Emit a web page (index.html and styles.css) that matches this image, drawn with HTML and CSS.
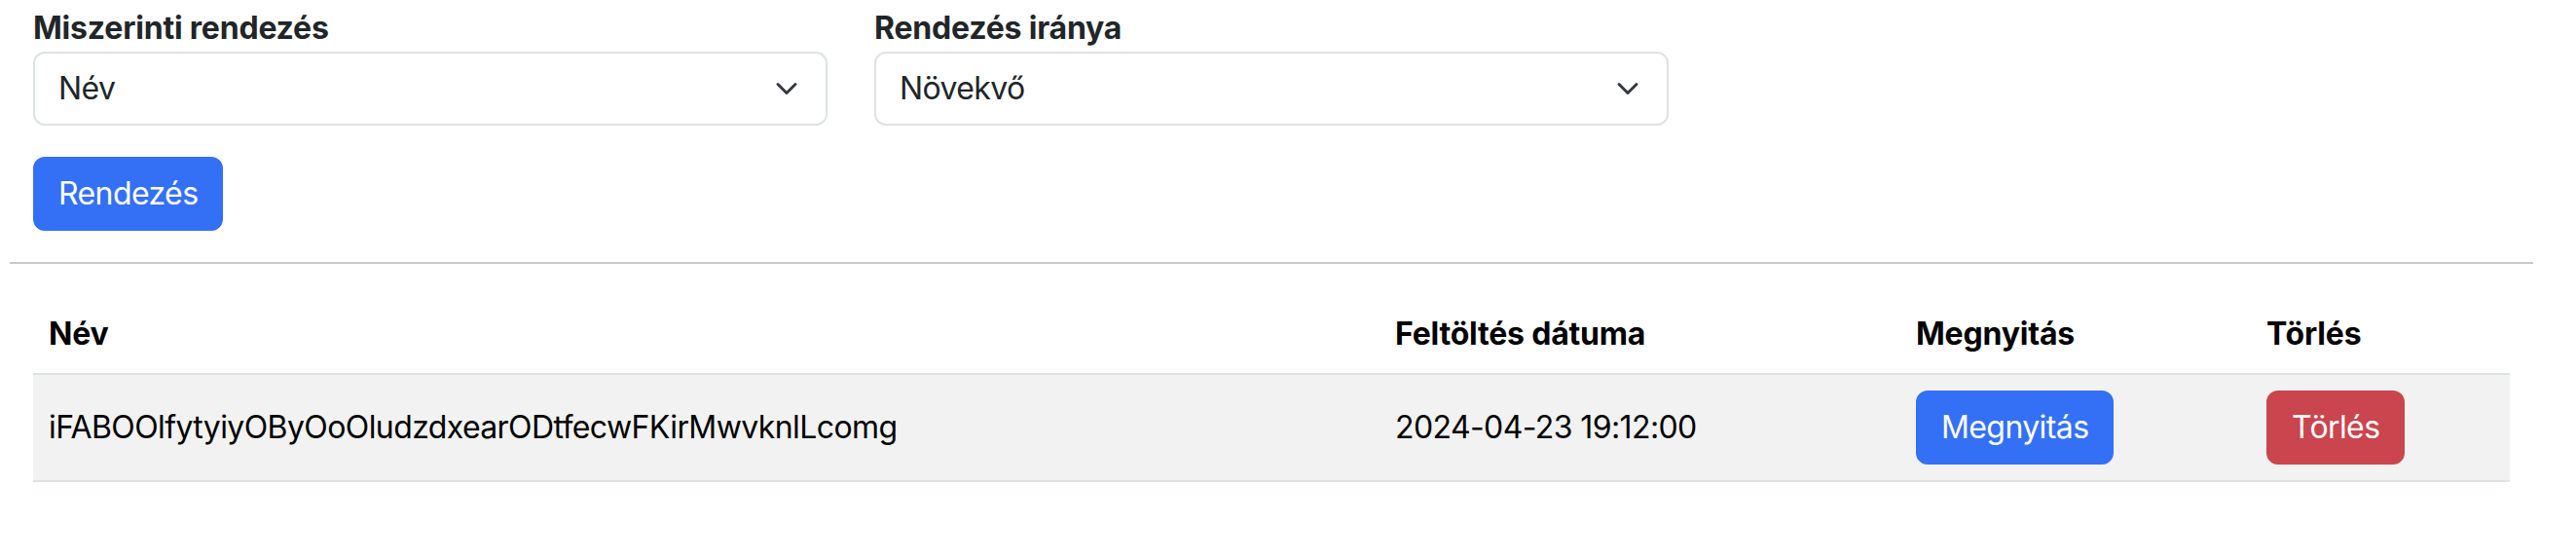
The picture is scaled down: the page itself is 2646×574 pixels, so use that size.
FILE: index.html
```html
<!DOCTYPE html>
<html lang="hu">
<head>
<meta charset="utf-8">
<title>Rendezés</title>
<link rel="stylesheet" href="styles.css">
</head>
<body>
<div class="page">
  <div class="filters">
    <div class="col">
      <label class="label">Miszerinti rendezés</label>
      <div class="select"><span>Név</span><svg class="chev" viewBox="0 0 16 16" width="32" height="24"><path d="m2 5 6 6 6-6" fill="none" stroke="#343a40" stroke-width="2" stroke-linecap="round" stroke-linejoin="round"/></svg></div>
    </div>
    <div class="col">
      <label class="label">Rendezés iránya</label>
      <div class="select"><span>Növekvő</span><svg class="chev" viewBox="0 0 16 16" width="32" height="24"><path d="m2 5 6 6 6-6" fill="none" stroke="#343a40" stroke-width="2" stroke-linecap="round" stroke-linejoin="round"/></svg></div>
    </div>
    <div class="col"></div>
  </div>
  <div class="actions">
    <button class="btn btn-primary">Rendezés</button>
  </div>
  <hr class="divider">
  <div class="table-wrap">
    <table class="table">
      <colgroup>
        <col class="c1"><col class="c2"><col class="c3"><col class="c4">
      </colgroup>
      <thead>
        <tr><th>Név</th><th>Feltöltés dátuma</th><th>Megnyitás</th><th>Törlés</th></tr>
      </thead>
      <tbody>
        <tr>
          <td>iFABOOlfytyiyOByOoOludzdxearODtfecwFKirMwvknlLcomg</td>
          <td>2024-04-23 19:12:00</td>
          <td><button class="btn btn-primary">Megnyitás</button></td>
          <td><button class="btn btn-danger">Törlés</button></td>
        </tr>
      </tbody>
    </table>
  </div>
</div>
</body>
</html>
```

FILE: styles.css
```css
* { box-sizing: border-box; }
html, body { margin: 0; padding: 0; background: #fff; }
body {
  font-family: Inter, "Noto Sans", "Liberation Sans", sans-serif;
  font-size: 32px;
  line-height: 48px;
  letter-spacing: -0.6px;
  color: #212529;
}
.page {
  width: 2592px;
  margin-left: 10px;
  padding-top: 5px;
}
.filters {
  display: grid;
  grid-template-columns: repeat(3, 864px);
}
.col { padding: 0 24px; }
.label {
  display: block;
  font-weight: 700;
  line-height: 48px;
  letter-spacing: -0.2px;
}
.select {
  display: flex;
  align-items: center;
  justify-content: space-between;
  height: 76px;
  padding: 0 24px;
  border: 2px solid #dee2e6;
  border-radius: 12px;
  background: #fff;
  color: #212529;
}
.chev { display: block; }
.actions { padding: 32px 24px 0; }
.btn {
  display: inline-block;
  font-family: inherit;
  font-size: 32px;
  line-height: 48px;
  letter-spacing: -0.6px;
  padding: 12px 24px;
  border: 2px solid transparent;
  border-radius: 12px;
  color: #fff;
  cursor: pointer;
}
.btn-primary { background: #3470f5; border-color: #3470f5; }
.btn-danger { background: #ca454d; border-color: #ca454d; }
.divider {
  margin: 32px 0;
  border: 0;
  border-top: 2px solid #c8c9ca;
  height: 0;
}
.table-wrap { padding: 0 24px; }
.table {
  width: 2544px;
  border-collapse: collapse;
  table-layout: fixed;
  color: #000;
}
.c1 { width: 1383px; }
.c2 { width: 535px; }
.c3 { width: 360px; }
.c4 { width: 266px; }
.table th, .table td {
  padding: 16px;
  text-align: left;
  vertical-align: middle;
  border-bottom: 2px solid #dee2e6;
  white-space: nowrap;
}
.table th { font-weight: 700; letter-spacing: -0.2px; }
.table tbody tr { background: #f2f2f2; }
```
